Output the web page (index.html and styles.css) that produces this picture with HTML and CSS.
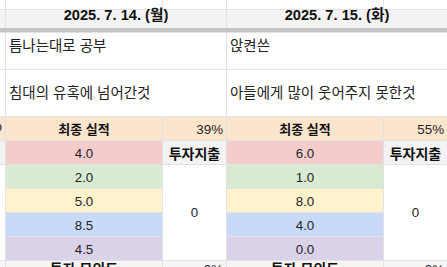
FILE: index.html
```html
<!DOCTYPE html>
<html lang="ko">
<head>
<meta charset="utf-8">
<title>Sheet</title>
<link rel="stylesheet" href="styles.css">
</head>
<body>
<div class="sheet">
  <!-- row 0 (partial) -->
  <div class="c"></div>
  <div class="c"></div>
  <div class="c"></div>
  <div class="c"></div>
  <div class="c"></div>

  <!-- header -->
  <div class="c gray"></div>
  <div class="c gray head span2">2025. 7. 14. (월)</div>
  <div class="c gray head span2">2025. 7. 15. (화)</div>

  <!-- frozen separator -->
  <div class="sep"></div>

  <!-- memo rows -->
  <div class="c"></div>
  <div class="c memo top span2">틈나는대로 공부</div>
  <div class="c memo top span2">앉켠쓴</div>

  <div class="c"></div>
  <div class="c memo mid span2">침대의 유혹에 넘어간것</div>
  <div class="c memo mid span2">아들에게 많이 웃어주지 못한것</div>

  <!-- final result -->
  <div class="c orange"><div class="frag right">45%</div></div>
  <div class="c orange num bold label">최종 실적</div>
  <div class="c orange num right">39%</div>
  <div class="c orange num bold label">최종 실적</div>
  <div class="c orange num right">55%</div>

  <!-- pink -->
  <div class="c gray"><div class="frag num bold spend">투자지출</div></div>
  <div class="c pink num">4.0</div>
  <div class="c gray num bold spend">투자지출</div>
  <div class="c pink num">6.0</div>
  <div class="c gray num bold spend">투자지출</div>

  <!-- green .. purple -->
  <div class="c tall"></div>
  <div class="c green num">2.0</div>
  <div class="c tall zero">0</div>
  <div class="c green num">1.0</div>
  <div class="c tall zero">0</div>

  <div class="c yellow num">5.0</div>
  <div class="c yellow num">8.0</div>

  <div class="c blue num">8.5</div>
  <div class="c blue num">4.0</div>

  <div class="c purple num">4.5</div>
  <div class="c purple num">0.0</div>

  <!-- bottom (cut) -->
  <div class="c light"></div>
  <div class="c light bottom bold">투자 모의도</div>
  <div class="c light bottom right">0%</div>
  <div class="c light bottom bold">투자 모의도</div>
  <div class="c light bottom right">0%</div>
</div>
</body>
</html>
```

FILE: styles.css
```css
html, body {
  margin: 0;
  padding: 0;
  background: #ffffff;
  overflow: hidden;
}

body {
  font-family: "Liberation Sans", "Noto Sans CJK KR", sans-serif;
  color: #1f1f1f;
}

.sheet {
  display: grid;
  width: 447px;
  grid-template-columns: 5px 156px 63px 156px 63px;
  grid-template-rows: 9px 18px 3px 36px 46px repeat(7, 23px);
  gap: 1px;
  background: #e2e2e2;
}

.c {
  background: #ffffff;
  overflow: hidden;
  white-space: nowrap;
  box-sizing: border-box;
}

.span2 { grid-column: span 2; }

.gray { background: #f3f3f3; }
.light { background: #f5f5f5; }
.orange { background: #fce5cd; }
.pink { background: #f4cccc; }
.green { background: #d9ead3; }
.yellow { background: #fff2cc; }
.blue { background: #c9daf8; }
.purple { background: #d9d2e9; }

.c.head {
  overflow: visible;
  font-weight: bold;
  font-size: 14.67px;
  line-height: 11px;
  text-align: center;
  color: #111;
}

.sep {
  grid-column: 1 / -1;
  margin-top: -1px;
  background: #c4c4c4;
}

.memo {
  font-size: 14.5px;
  line-height: 18px;
  padding-left: 3px;
  color: #222;
}
.memo.top { padding-top: 4px; }
.memo.mid { padding-top: 14px; }

.num {
  font-size: 13.33px;
  line-height: 20px;
  padding-top: 3px;
  text-align: center;
}

.bold { font-weight: bold; color: #111; }

.label { font-size: 13px; }

.spend { font-size: 14px; }

.right {
  text-align: right;
  padding-right: 3px;
}

.tall {
  grid-row: span 4;
}

.zero {
  display: flex;
  align-items: center;
  justify-content: center;
  font-size: 13.33px;
  padding-bottom: 1px;
}

.frag {
  width: 63px;
  margin-left: -58px;
  box-sizing: border-box;
}

.bottom {
  font-size: 14px;
  line-height: 17px;
  text-align: center;
}
.bottom.right {
  text-align: right;
  font-size: 13.33px;
}
```
